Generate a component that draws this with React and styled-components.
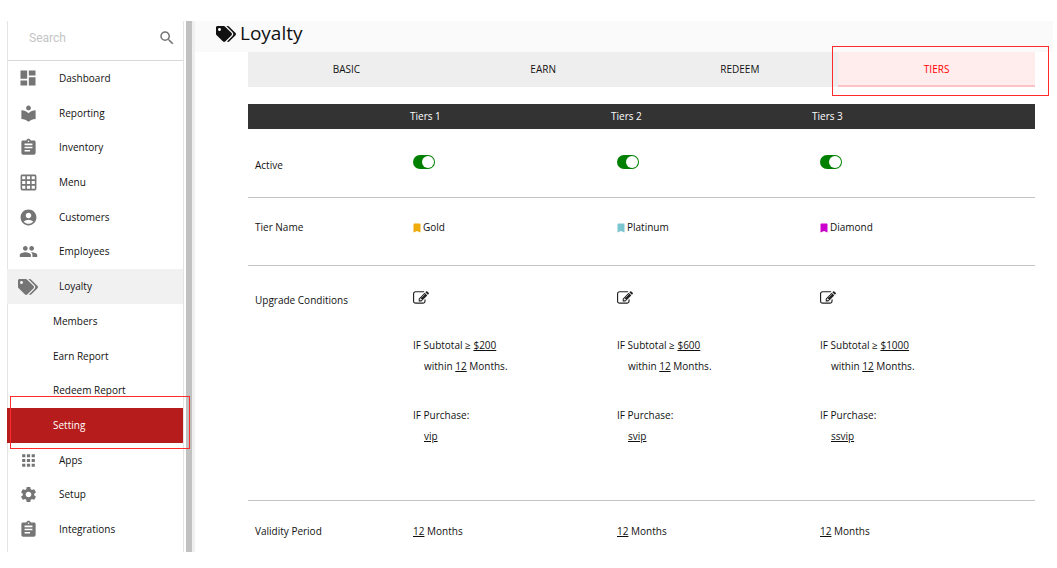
import { useState } from 'react'
import styled, { createGlobalStyle } from 'styled-components'
import {
  MdAccountCircle,
  MdApps,
  MdAssignment,
  MdBookmark,
  MdDashboard,
  MdGridOn,
  MdLocalLibrary,
  MdPeople,
  MdSearch,
  MdSettings
} from 'react-icons/md'
import { FaTags } from 'react-icons/fa'

const GlobalStyle = createGlobalStyle`
  * {
    box-sizing: border-box;
  }

  body {
    margin: 0;
    background: #fff;
    color: #111;
    font-family: 'Open Sans', 'Noto Sans', sans-serif;
    font-size: 10px;
    line-height: 21px;
  }

  a {
    color: inherit;
    text-decoration: none;
  }

  p {
    margin: 0;
  }
`

const Page = styled.div`
  display: flex;
  min-height: 100vh;
  padding: 21px 4px 16px 7px;
`

const Sidebar = styled.aside`
  display: flex;
  flex-direction: column;
  flex: none;
  width: 177px;
  border-left: 1px solid #e4e4e4;
  border-right: 1px solid #e4e4e4;
`

const SearchBar = styled.label`
  display: flex;
  align-items: center;
  height: 40px;
  padding: 0 7px 6px 21px;
  border-bottom: 1px solid #d8d8d8;
  color: #757575;

  input {
    flex: 1;
    min-width: 0;
    padding: 0;
    border: 0;
    outline: 0;
    background: none;
    font-family: Roboto, sans-serif;
    font-size: 12px;
  }

  input::placeholder {
    color: #c4c4c4;
  }
`

const Menu = styled.nav`
  display: flex;
  flex-direction: column;
  flex: 1;
  padding-bottom: 5px;
`

const MenuItem = styled.a`
  position: relative;
  display: flex;
  align-items: center;
  flex: 1;
  margin-left: -1px;
  min-height: 32px;
  padding-left: ${({ $sub }) => ($sub ? 46 : 11)}px;
  background: ${({ $open, $selected }) => ($selected ? '#b71c1c' : $open ? '#f1f1f1' : 'none')};
  color: ${({ $selected }) => ($selected ? '#fff' : '#111')};
`

const MenuIcon = styled.span`
  display: flex;
  justify-content: center;
  width: 20px;
  margin-right: 21px;
  color: #757575;
`

const Highlight = styled.span`
  position: absolute;
  inset: ${({ $inset }) => $inset};
  border: 1px solid #ff2a2a;
  pointer-events: none;
`

const ScrollTrack = styled.div`
  flex: none;
  width: 9px;
  margin-left: 2px;
  border-right: 3px solid #f0f0f0;
  background: #c1c1c1;
`

const Main = styled.main`
  flex: 1;
  min-width: 0;
`

const Header = styled.header`
  display: flex;
  align-items: center;
  gap: 4px;
  height: 31px;
  padding: 0 21px 6px;
  background: #fafafa;

  h1 {
    margin: 0;
    font-size: 19px;
    font-weight: 400;
  }
`

const Content = styled.div`
  padding: 0 18px 0 53px;
`

const Tabs = styled.div`
  display: flex;
  margin-bottom: 17px;
  background: #eee;
`

const Tab = styled.button`
  position: relative;
  flex: 1;
  height: 35px;
  padding: 2px 0 0;
  border: 0;
  border-bottom: 2px solid ${({ $active }) => ($active ? '#fac3c6' : 'transparent')};
  background: ${({ $active }) => ($active ? '#ffeced' : 'none')};
  color: ${({ $active }) => ($active ? '#f00' : '#111')};
  font: inherit;
`

const Table = styled.table`
  display: block;

  thead, tbody {
    display: block;
  }

  th, td {
    padding: 0;
    font-weight: 400;
    text-align: left;
  }
`

const HeadRow = styled.tr`
  display: grid;
  grid-template-columns: 162fr 201fr 201fr 223fr;
  padding: 2px 0;
  background: #333;
  color: #fff;
`

const Row = styled.tr`
  display: grid;
  grid-template-columns: 165fr 204fr 203fr 215fr;
  padding: ${({ $top }) => $top}px 0 ${({ $bottom }) => $bottom}px;
  border-bottom: 1px solid #c4c4c4;

  &:last-child {
    border-bottom: 0;
  }

  th {
    padding-left: 7px;
  }
`

const Switch = styled.input`
  appearance: none;
  display: flex;
  justify-content: flex-start;
  width: 22px;
  height: 14px;
  margin: 0;
  padding: 1px;
  border-radius: 7px;
  background: #999;

  &::before {
    content: '';
    width: 12px;
    height: 12px;
    border-radius: 50%;
    background: #fff;
  }

  &:checked {
    justify-content: flex-end;
    background: #008000;
  }
`

const TierName = styled.span`
  display: flex;
  align-items: center;

  svg {
    margin-left: -2px;
    color: ${({ $color }) => $color};
  }
`

const EditButton = styled.button`
  display: flex;
  align-items: flex-start;
  height: 21px;
  padding: 0;
  border: 0;
  background: none;
  color: #222;

  svg {
    width: 16px;
    height: 16px;
  }
`

const Condition = styled.div`
  margin-top: ${({ $gap }) => $gap}px;

  p + p {
    padding-left: 11px;
  }
`

const EditIcon = () => (
  <svg viewBox="0 0 1792 1792" fill="currentColor" aria-hidden="true">
    <path d="M888 1184l116-116-152-152-116 116v56h96v96h56zm440-720q-16-16-33 1l-350 350q-17 17-1 33t33-1l350-350q17-17 1-33zm80 594v190q0 119-84.5 203.5t-203.5 84.5h-832q-119 0-203.5-84.5t-84.5-203.5v-832q0-119 84.5-203.5t203.5-84.5h832q63 0 117 25 15 7 18 23 3 17-9 29l-49 49q-14 14-32 8-23-6-45-6h-832q-66 0-113 47t-47 113v832q0 66 47 113t113 47h832q66 0 113-47t47-113v-126q0-13 9-22l64-64q15-15 35-7t20 29zm-96-738l288 288-672 672h-288v-288zm444 132l-92 92-288-288 92-92q28-28 68-28t68 28l152 152q28 28 28 68t-28 68z" />
  </svg>
)

const menu = [
  { label: 'Dashboard', icon: <MdDashboard size={20} /> },
  { label: 'Reporting', icon: <MdLocalLibrary size={19} /> },
  { label: 'Inventory', icon: <MdAssignment size={19} /> },
  { label: 'Menu', icon: <MdGridOn size={19} /> },
  { label: 'Customers', icon: <MdAccountCircle size={19} /> },
  { label: 'Employees', icon: <MdPeople size={19} /> },
  { label: 'Loyalty', icon: <FaTags size={20} />, open: true },
  { label: 'Members', sub: true },
  { label: 'Earn Report', sub: true },
  { label: 'Redeem Report', sub: true },
  { label: 'Setting', sub: true, selected: true },
  { label: 'Apps', icon: <MdApps size={19} /> },
  { label: 'Setup', icon: <MdSettings size={19} /> },
  { label: 'Integrations', icon: <MdAssignment size={19} /> }
]

const tabs = ['BASIC', 'EARN', 'REDEEM', 'TIERS']

const initialTiers = [
  { title: 'Tiers 1', name: 'Gold', color: '#f0ab0c', subtotal: '$200', product: 'vip', months: 12, active: true },
  { title: 'Tiers 2', name: 'Platinum', color: '#7cc6d0', subtotal: '$600', product: 'svip', months: 12, active: true },
  { title: 'Tiers 3', name: 'Diamond', color: '#cc00cc', subtotal: '$1000', product: 'ssvip', months: 12, active: true }
]

const App = () => {
  const [activeTab, setActiveTab] = useState('TIERS')
  const [tiers, setTiers] = useState(initialTiers)

  const toggleTier = title => {
    setTiers(tiers.map(t => (t.title === title ? { ...t, active: !t.active } : t)))
  }

  return (
    <Page>
      <GlobalStyle />
      <Sidebar>
        <SearchBar>
          <input type="text" placeholder="Search" aria-label="Search" />
          <MdSearch size={18} />
        </SearchBar>
        <Menu>
          {menu.map(({ label, icon, sub, open, selected }) => (
            <MenuItem key={label} href="#" $sub={sub} $open={open} $selected={selected}>
              {icon && <MenuIcon>{icon}</MenuIcon>}
              {label}
              {selected && <Highlight $inset="-12px -7px -6px 3px" />}
            </MenuItem>
          ))}
        </Menu>
      </Sidebar>
      <ScrollTrack />
      <Main>
        <Header>
          <FaTags size={20} />
          <h1>Loyalty</h1>
        </Header>
        <Content>
          <Tabs role="tablist">
            {tabs.map(tab => (
              <Tab
                key={tab}
                type="button"
                role="tab"
                aria-selected={tab === activeTab}
                $active={tab === activeTab}
                onClick={() => setActiveTab(tab)}
              >
                {tab}
                {tab === activeTab && <Highlight $inset="-6px -14px -11px -6px" />}
              </Tab>
            ))}
          </Tabs>
          <Table>
            <thead>
              <HeadRow>
                <td />
                {tiers.map(t => <th key={t.title} scope="col">{t.title}</th>)}
              </HeadRow>
            </thead>
            <tbody>
              <Row $top={26} $bottom={21}>
                <th scope="row">Active</th>
                {tiers.map(t => (
                  <td key={t.title}>
                    <Switch
                      type="checkbox"
                      role="switch"
                      aria-label={`${t.title} active`}
                      checked={t.active}
                      onChange={() => toggleTier(t.title)}
                    />
                  </td>
                ))}
              </Row>
              <Row $top={19} $bottom={27}>
                <th scope="row">Tier Name</th>
                {tiers.map(t => (
                  <td key={t.title}>
                    <TierName $color={t.color}><MdBookmark size={12} />{t.name}</TierName>
                  </td>
                ))}
              </Row>
              <Row $top={24} $bottom={53}>
                <th scope="row">Upgrade Conditions</th>
                {tiers.map(t => (
                  <td key={t.title}>
                    <EditButton type="button" aria-label={`Edit ${t.title}`}><EditIcon /></EditButton>
                    <Condition $gap={24}>
                      <p>IF Subtotal ≥ <u>{t.subtotal}</u></p>
                      <p>within <u>{t.months}</u> Months.</p>
                    </Condition>
                    <Condition $gap={28}>
                      <p>IF Purchase:</p>
                      <p><u>{t.product}</u></p>
                    </Condition>
                  </td>
                ))}
              </Row>
              <Row $top={20} $bottom={0}>
                <th scope="row">Validity Period</th>
                {tiers.map(t => <td key={t.title}><u>{t.months}</u> Months</td>)}
              </Row>
            </tbody>
          </Table>
        </Content>
      </Main>
    </Page>
  )
}

export default App
